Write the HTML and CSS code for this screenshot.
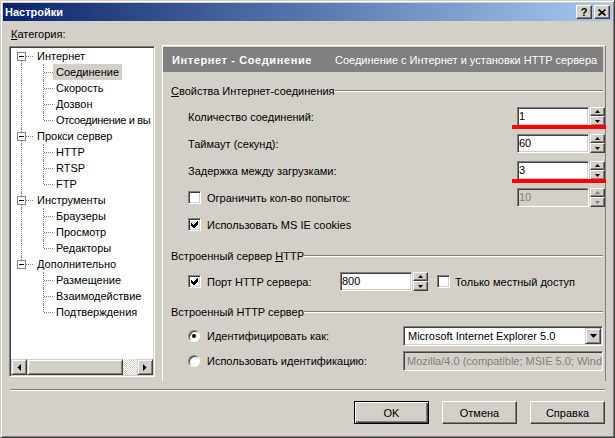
FILE: index.html
```html
<!DOCTYPE html>
<html lang="ru">
<head>
    <meta charset="UTF-8">
    <title>Настройки</title>
    <link rel="stylesheet" href="styles.css">
</head>
<body>

<div class="window">
    <!-- Заголовок окна -->
    <div class="titlebar">
        <span class="title">Настройки</span>
        <div class="cap-btns">
            <button class="cap-btn">?</button>
            <button class="cap-btn">
                <svg width="8" height="7" viewBox="0 0 8 7"><path d="M0.5 0.5 L7.5 6.5 M7.5 0.5 L0.5 6.5" stroke="#000" stroke-width="1.6"/></svg>
            </button>
        </div>
    </div>

    <div class="client">
        <div class="cat-label"><u>К</u>атегория:</div>

        <div class="main">
            <!-- Дерево категорий -->
            <div class="tree-box">
                <div class="tree">
                    <div class="node root"><span class="cell t first"><span class="exp"></span></span><span class="lbl">Интернет</span></div>
                    <div class="node"><span class="cell v"></span><span class="cell sub t"></span><span class="lbl sel">Соединение</span></div>
                    <div class="node"><span class="cell v"></span><span class="cell sub t"></span><span class="lbl">Скорость</span></div>
                    <div class="node"><span class="cell v"></span><span class="cell sub t"></span><span class="lbl">Дозвон</span></div>
                    <div class="node"><span class="cell v"></span><span class="cell sub l"></span><span class="lbl tight">Отсоединение и вы</span></div>

                    <div class="node root"><span class="cell t"><span class="exp"></span></span><span class="lbl">Прокси сервер</span></div>
                    <div class="node"><span class="cell v"></span><span class="cell sub t"></span><span class="lbl">HTTP</span></div>
                    <div class="node"><span class="cell v"></span><span class="cell sub t"></span><span class="lbl">RTSP</span></div>
                    <div class="node"><span class="cell v"></span><span class="cell sub l"></span><span class="lbl">FTP</span></div>

                    <div class="node root"><span class="cell t"><span class="exp"></span></span><span class="lbl">Инструменты</span></div>
                    <div class="node"><span class="cell v"></span><span class="cell sub t"></span><span class="lbl">Браузеры</span></div>
                    <div class="node"><span class="cell v"></span><span class="cell sub t"></span><span class="lbl">Просмотр</span></div>
                    <div class="node"><span class="cell v"></span><span class="cell sub l"></span><span class="lbl">Редакторы</span></div>

                    <div class="node root"><span class="cell l"><span class="exp"></span></span><span class="lbl">Дополнительно</span></div>
                    <div class="node"><span class="cell"></span><span class="cell sub t"></span><span class="lbl">Размещение</span></div>
                    <div class="node"><span class="cell"></span><span class="cell sub t"></span><span class="lbl">Взаимодействие</span></div>
                    <div class="node"><span class="cell"></span><span class="cell sub l"></span><span class="lbl">Подтверждения</span></div>
                </div>
                <div class="hscroll">
                    <div class="sb-btn"><svg width="4" height="7" viewBox="0 0 4 7"><polygon points="4,0 4,7 0.5,3.5" fill="#000"/></svg></div>
                    <div class="sb-thumb"></div>
                    <div class="sb-track"></div>
                    <div class="sb-btn"><svg width="4" height="7" viewBox="0 0 4 7"><polygon points="0,0 0,7 3.5,3.5" fill="#000"/></svg></div>
                </div>
            </div>

            <!-- Страница настроек -->
            <div class="page">
                <div class="page-head">
                    <span class="head-title">Интернет - Соединение</span>
                    <span class="head-desc">Соединение с Интернет и установки HTTP сервера</span>
                </div>

                <div class="group-title g1"><span><u>С</u>войства Интернет-соединения</span></div>
                <div class="rows r1">
                    <div class="row">
                        <span>Количество соединений:</span>
                        <div class="ctl">
                            <div class="edit">1</div>
                            <div class="spin">
                                <div class="spin-btn up"><svg width="5" height="3" viewBox="0 0 5 3"><polygon points="2.5,0 5,3 0,3" fill="#000"/></svg></div>
                                <div class="spin-btn dn"><svg width="5" height="3" viewBox="0 0 5 3"><polygon points="0,0 5,0 2.5,3" fill="#000"/></svg></div>
                            </div>
                            <div class="mark"></div>
                        </div>
                    </div>
                    <div class="row">
                        <span>Таймаут (секунд):</span>
                        <div class="ctl">
                            <div class="edit">60</div>
                            <div class="spin">
                                <div class="spin-btn up"><svg width="5" height="3" viewBox="0 0 5 3"><polygon points="2.5,0 5,3 0,3" fill="#000"/></svg></div>
                                <div class="spin-btn dn"><svg width="5" height="3" viewBox="0 0 5 3"><polygon points="0,0 5,0 2.5,3" fill="#000"/></svg></div>
                            </div>
                        </div>
                    </div>
                    <div class="row">
                        <span>Задержка между загрузками:</span>
                        <div class="ctl">
                            <div class="edit">3</div>
                            <div class="spin">
                                <div class="spin-btn up"><svg width="5" height="3" viewBox="0 0 5 3"><polygon points="2.5,0 5,3 0,3" fill="#000"/></svg></div>
                                <div class="spin-btn dn"><svg width="5" height="3" viewBox="0 0 5 3"><polygon points="0,0 5,0 2.5,3" fill="#000"/></svg></div>
                            </div>
                            <div class="mark"></div>
                        </div>
                    </div>
                    <div class="row">
                        <span class="chk"></span>
                        <span>Ограничить кол-во попыток:</span>
                        <div class="ctl">
                            <div class="edit off">10</div>
                            <div class="spin">
                                <div class="spin-btn up"><svg width="5" height="3" viewBox="0 0 5 3"><polygon points="2.5,0 5,3 0,3" fill="#808080"/></svg></div>
                                <div class="spin-btn dn"><svg width="5" height="3" viewBox="0 0 5 3"><polygon points="0,0 5,0 2.5,3" fill="#808080"/></svg></div>
                            </div>
                        </div>
                    </div>
                    <div class="row">
                        <span class="chk on"><svg width="7" height="7" viewBox="0 0 7 7" shape-rendering="crispEdges"><polygon points="0,2 2,4 6,0 7,0 7,3 3,7 2,7 0,5" fill="#000"/></svg></span>
                        <span>Использовать MS IE cookies</span>
                    </div>
                </div>

                <div class="group-title g2"><span>Встроенный сервер <u>H</u>TTP</span></div>
                <div class="rows r2">
                    <div class="row">
                        <div class="port-lbl">
                            <span class="chk on"><svg width="7" height="7" viewBox="0 0 7 7" shape-rendering="crispEdges"><polygon points="0,2 2,4 6,0 7,0 7,3 3,7 2,7 0,5" fill="#000"/></svg></span>
                            <span>Порт HTTP сервера:</span>
                        </div>
                        <div class="edit">800</div>
                        <div class="spin">
                            <div class="spin-btn up"><svg width="5" height="3" viewBox="0 0 5 3"><polygon points="2.5,0 5,3 0,3" fill="#000"/></svg></div>
                            <div class="spin-btn dn"><svg width="5" height="3" viewBox="0 0 5 3"><polygon points="0,0 5,0 2.5,3" fill="#000"/></svg></div>
                        </div>
                        <span class="chk local"></span>
                        <span>Только местный доступ</span>
                    </div>
                </div>

                <div class="group-title g3"><span>Встроенный HTTP сервер</span></div>
                <div class="rows r3">
                    <div class="row short">
                        <div class="radio-lbl"><span class="radio on"></span><span>Идентифицировать как:</span></div>
                        <div class="select">
                            <span class="select-text">Microsoft Internet Explorer 5.0</span>
                            <span class="drop-btn"><svg width="7" height="4" viewBox="0 0 7 4"><polygon points="0,0 7,0 3.5,4" fill="#000"/></svg></span>
                        </div>
                    </div>
                    <div class="row short">
                        <div class="radio-lbl"><span class="radio"></span><span>Использовать идентификацию:</span></div>
                        <div class="edit wide off">Mozilla/4.0 (compatible; MSIE 5.0; Wind</div>
                    </div>
                </div>
            </div>
        </div>

        <div class="separator"></div>

        <div class="buttons">
            <button class="btn default">OK</button>
            <button class="btn">Отмена</button>
            <button class="btn">Справка</button>
        </div>
    </div>
</div>

</body>
</html>
```

FILE: styles.css
```css
body {
    margin: 0;
    font-family: "Liberation Sans", Arial, sans-serif;
    font-size: 11px;
    color: #000;
    background: #d4d0c8;
}

.window {
    width: 615px;
    height: 438px;
    box-sizing: border-box;
    background: #d4d0c8;
    border: 1px solid;
    border-color: #d4d0c8 #404040 #404040 #d4d0c8;
    box-shadow: inset 1px 1px #fff, inset -1px -1px #808080;
    padding: 2px;
    display: flex;
    flex-direction: column;
}

/* заголовок */
.titlebar {
    height: 18px;
    display: flex;
    align-items: center;
    padding: 0 2px;
    background: linear-gradient(to right, #0a246a, #a6caf0);
}

.title {
    flex: 1;
    color: #fff;
    font-weight: bold;
}

.cap-btns {
    display: flex;
    gap: 2px;
}

.cap-btn {
    width: 16px;
    height: 14px;
    padding: 0;
    box-sizing: border-box;
    background: #d4d0c8;
    border: 1px solid;
    border-color: #fff #404040 #404040 #fff;
    box-shadow: inset -1px -1px #808080;
    font: bold 11px "Liberation Sans", Arial, sans-serif;
    line-height: 11px;
    display: flex;
    align-items: center;
    justify-content: center;
}

.client {
    flex: 1;
    padding: 0 6px;
    display: flex;
    flex-direction: column;
}

.cat-label {
    margin-top: 7px;
    padding-left: 2px;
    height: 13px;
    line-height: 13px;
}

.main {
    display: flex;
    gap: 7px;
    margin-top: 4px;
    height: 336px;
}

/* дерево */
.tree-box {
    width: 146px;
    height: 331px;
    margin-top: 1px;
    box-sizing: border-box;
    background: #fff;
    border: 1px solid;
    border-color: #808080 #fff #fff #808080;
    box-shadow: inset 1px 1px #404040, inset -1px -1px #d4d0c8;
    padding: 1px;
    display: flex;
    flex-direction: column;
}

.tree {
    flex: 1;
    overflow: hidden;
}

.node {
    display: flex;
    height: 16px;
    line-height: 16px;
    white-space: nowrap;
}

.cell {
    position: relative;
    width: 22px;
    height: 16px;
    flex: none;
}

.cell.sub {
    width: 20px;
}

.cell.v::before,
.cell.t::before,
.cell.l::before {
    content: "";
    position: absolute;
    left: 10px;
    top: 0;
    bottom: 0;
    border-left: 1px dotted #808080;
}

.cell.first::before {
    top: 8px;
}

.cell.l::before {
    bottom: 8px;
}

.cell.t::after,
.cell.l::after {
    content: "";
    position: absolute;
    left: 11px;
    right: 0;
    top: 8px;
    border-top: 1px dotted #808080;
}

.exp {
    position: absolute;
    left: 6px;
    top: 4px;
    width: 9px;
    height: 9px;
    box-sizing: border-box;
    border: 1px solid #808080;
    background: #fff;
    z-index: 1;
}

.exp::after {
    content: "";
    position: absolute;
    left: 1px;
    top: 3px;
    width: 5px;
    height: 1px;
    background: #000;
}

.lbl {
    padding: 0 3px;
}

.lbl.tight {
    padding-right: 0;
    letter-spacing: -0.35px;
}

.root .lbl {
    margin-left: 2px;
    padding: 0 2px;
}

.lbl.sel {
    background: #d4d0c8;
}

.hscroll {
    height: 16px;
    display: flex;
    flex: none;
}

.sb-btn,
.sb-thumb {
    box-sizing: border-box;
    background: #d4d0c8;
    border: 1px solid;
    border-color: #d4d0c8 #404040 #404040 #d4d0c8;
    box-shadow: inset 1px 1px #fff, inset -1px -1px #808080;
}

.sb-btn {
    width: 16px;
    display: flex;
    align-items: center;
    justify-content: center;
}

.sb-thumb {
    width: 96px;
}

.sb-track {
    flex: 1;
    background: repeating-conic-gradient(#d4d0c8 0 25%, #fff 0 50%) 0 0 / 2px 2px;
}

/* страница */
.page {
    flex: 1;
    border-top: 1px solid #fff;
    border-left: 1px solid #fff;
    border-right: 1px solid #808080;
}

.page-head {
    height: 25px;
    margin: 1px 2px 0 0;
    padding-left: 9px;
    background: #808080;
    color: #fff;
    display: flex;
    align-items: center;
    white-space: nowrap;
}

.head-title {
    font-weight: bold;
    letter-spacing: 0.6px;
}

.head-desc {
    margin-left: 23px;
}

.group-title {
    display: flex;
    align-items: center;
    height: 13px;
    line-height: 13px;
    padding-left: 8px;
    margin-right: 2px;
}

.group-title::after {
    content: "";
    flex: 1;
    border-top: 1px solid #808080;
    border-bottom: 1px solid #fff;
    margin-top: -1px;
}

.g1 { margin-top: 13px; }
.g2 { margin-top: 12px; }
.g3 { margin-top: 11px; }

.rows { margin-top: 5px; }
.r3 { margin-top: 4px; }

.row {
    display: flex;
    align-items: center;
    height: 27px;
    padding-left: 25px;
    white-space: nowrap;
}

.row.short {
    height: 25px;
}

.ctl {
    margin-left: auto;
    display: flex;
    gap: 1px;
    position: relative;
}

.edit {
    width: 72px;
    height: 19px;
    line-height: 17px;
    box-sizing: border-box;
    padding: 0 1px;
    background: #fff;
    border: 1px solid;
    border-color: #808080 #fff #fff #808080;
    box-shadow: inset 1px 1px #404040, inset -1px -1px #d4d0c8;
    overflow: hidden;
    white-space: nowrap;
}

.edit.off {
    background: #d4d0c8;
    color: #808080;
}

.edit.wide {
    width: 200px;
    height: 20px;
    line-height: 18px;
    padding-left: 3px;
}

.spin {
    width: 15px;
    height: 19px;
    display: flex;
    flex-direction: column;
    margin-left: 1px;
}

.ctl .spin {
    margin-left: 0;
}

.spin-btn {
    box-sizing: border-box;
    background: #d4d0c8;
    border: 1px solid;
    border-color: #fff #404040 #404040 #fff;
    box-shadow: inset -1px -1px #808080;
    display: flex;
    align-items: center;
    justify-content: center;
}

.spin-btn.up { height: 9px; }
.spin-btn.dn { height: 10px; }

.mark {
    position: absolute;
    left: -5px;
    right: -1px;
    top: 18px;
    height: 4px;
    background: #ff0000;
}

.chk {
    width: 13px;
    height: 13px;
    flex: none;
    box-sizing: border-box;
    margin-right: 6px;
    background: #fff;
    border: 1px solid;
    border-color: #808080 #fff #fff #808080;
    box-shadow: inset 1px 1px #404040, inset -1px -1px #d4d0c8;
    display: flex;
    align-items: center;
    justify-content: center;
}

.chk.local {
    margin-left: 9px;
    margin-right: 5px;
}

.port-lbl {
    width: 152px;
    display: flex;
    align-items: center;
}

.radio-lbl {
    width: 215px;
    display: flex;
    align-items: center;
}

.radio {
    width: 12px;
    height: 12px;
    flex: none;
    box-sizing: border-box;
    margin-right: 7px;
    border-radius: 50%;
    background: #fff;
    border: 1px solid;
    border-color: #808080 #fff #fff #808080;
    box-shadow: inset 1px 1px #404040;
    display: flex;
    align-items: center;
    justify-content: center;
}

.radio.on::after {
    content: "";
    width: 4px;
    height: 4px;
    border-radius: 50%;
    background: #000;
}

.select {
    width: 200px;
    height: 20px;
    box-sizing: border-box;
    padding: 1px;
    background: #fff;
    border: 1px solid;
    border-color: #808080 #fff #fff #808080;
    box-shadow: inset 1px 1px #404040, inset -1px -1px #d4d0c8;
    display: flex;
    align-items: center;
}

.select-text {
    flex: 1;
    padding-left: 3px;
}

.drop-btn {
    width: 16px;
    height: 16px;
    box-sizing: border-box;
    background: #d4d0c8;
    border: 1px solid;
    border-color: #d4d0c8 #404040 #404040 #d4d0c8;
    box-shadow: inset 1px 1px #fff, inset -1px -1px #808080;
    display: flex;
    align-items: center;
    justify-content: center;
}

/* кнопки внизу */
.separator {
    margin: 8px 1px 0;
    border-top: 1px solid #808080;
    border-bottom: 1px solid #fff;
}

.buttons {
    display: flex;
    justify-content: flex-end;
    gap: 13px;
    margin-top: 10px;
    padding-right: 1px;
}

.btn {
    width: 75px;
    height: 23px;
    padding: 0;
    box-sizing: border-box;
    background: #d4d0c8;
    border: 1px solid;
    border-color: #fff #404040 #404040 #fff;
    box-shadow: inset -1px -1px #808080;
    font: 11px "Liberation Sans", Arial, sans-serif;
    color: #000;
}

.btn.default {
    border: 1px solid #000;
    box-shadow: inset 1px 1px #fff, inset -1px -1px #404040, inset -2px -2px #808080;
}
```
